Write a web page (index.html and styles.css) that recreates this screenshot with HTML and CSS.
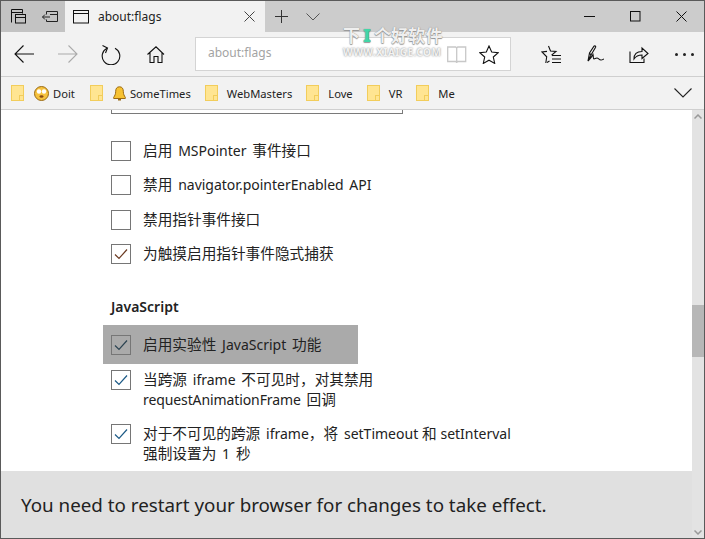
FILE: index.html
```html
<!DOCTYPE html>
<html lang="zh-CN">
<head>
<meta charset="utf-8">
<title>about:flags</title>
<link rel="stylesheet" href="styles.css">
</head>
<body>
<div class="window">
  <header class="titlebar">
    <div class="tabtools">
      <button class="ib tt1"><svg width="18" height="18" viewBox="0 0 18 18" fill="none" stroke="#111"><path d="M1.500 14.500v-13h11v4M1.500 4.500h11"/><rect x="5.500" y="6.500" width="10" height="8.500" fill="#c4c4c4"/><path d="M5.500 9.500h10"/></svg></button>
      <button class="ib tt2"><svg width="18" height="18" viewBox="0 0 18 18" fill="none" stroke="#222"><path d="M5.500 3.500h11v10h-11v-2M5.500 6.500v-3M16 6.500H9"/><path d="M9 9H1.500M4 6.500 1.500 9 4 11.500"/></svg></button>
    </div>
    <div class="tab">
      <svg class="tabicon" width="17" height="14" viewBox="0 0 17 14" fill="none" stroke="#111"><rect x=".5" y=".5" width="15" height="12.500"/><path d="M.5 3.500h15"/></svg>
      <span class="tabtitle">about:flags</span>
      <svg class="tabclose" width="11" height="11" viewBox="0 0 11 11" stroke="#444"><path d="M.5.500l10 10M10.500.500l-10 10"/></svg>
    </div>
    <div class="tabactions">
      <svg width="13" height="13" viewBox="0 0 13 13" stroke="#333"><path d="M6.500 0v13M0 6.500h13"/></svg>
      <svg width="14" height="8" viewBox="0 0 14 8" fill="none" stroke="#555"><path d="M.5.500 7 7 13.500.500"/></svg>
    </div>
    <div class="caption">
      <svg width="11" height="11" viewBox="0 0 11 11" stroke="#111"><path d="M0 5.500h11"/></svg>
      <svg width="11" height="11" viewBox="0 0 11 11" fill="none" stroke="#111"><rect x=".5" y=".5" width="9.500" height="9.500"/></svg>
      <svg width="11" height="11" viewBox="0 0 11 11" stroke="#111"><path d="M.5.500l10 10M10.500.500l-10 10"/></svg>
    </div>
  </header>

  <nav class="toolbar">
    <svg class="nb" width="20" height="18" viewBox="0 0 20 18" fill="none" stroke="#111" stroke-width="1.100"><path d="M20 9H1M9.500.5 1 9l8.500 8.500"/></svg>
    <svg class="nb fwd" width="20" height="18" viewBox="0 0 20 18" fill="none" stroke="#aaa" stroke-width="1.100"><path d="M0 9h19M10.500.5 19 9l-8.500 8.500"/></svg>
    <svg class="nb rel" width="20" height="21" viewBox="0 0 20 21" fill="none" stroke="#111" stroke-width="1.100"><path d="M6 4.200a8.800 8.800 0 1 0 8 0"/><path d="M1.500 1.500 6.500 4 4.500 9"/></svg>
    <svg class="nb home" width="18" height="17" viewBox="0 0 18 17" fill="none" stroke="#111" stroke-width="1.100"><path d="M.5 8.500 9 .8l8 7.700M3 6.500v10h4v-6h4v6h4v-10"/></svg>
    <div class="address">
      <span class="url">about:flags</span>
      <svg class="book" width="20" height="17" viewBox="0 0 20 17" fill="none" stroke="#c8c8c8" stroke-width="1.300"><path d="M.7 1h8l1 1 1-1h8v14.500h-8l-1 1-1-1h-8zM9.700 2v13.500"/></svg>
      <svg class="star" width="20" height="19" viewBox="0 0 20 19" fill="none" stroke="#111" stroke-width="1.100"><path d="M10 1l2.700 6 6.500.7-4.900 4.300 1.400 6.400L10 15.200l-5.700 3.200L5.700 12 .8 7.700 7.300 7z"/></svg>
    </div>
    <div class="tools">
      <svg width="20" height="19" viewBox="0 0 20 19" fill="none" stroke="#111" stroke-width="1.100"><path d="M7.500 1l2 5 5.500.5-4 3.300 1 1M4.800 18l.9-6.200L1 7l5-.6M6 17.500l2.500-1.500"/><path d="M11 10.500h9M11 14h9M11 17.500h9"/></svg>
      <svg width="18" height="18" viewBox="0 0 18 18" fill="none" stroke="#111" stroke-width="1.100"><path d="M1 16 2.500 8 7 1.200c.8-.8 2 .1 1.600 1L4 10zM2.500 8l1.500 2M1 16c2-2 4-4.500 5-6.500.5 2 0 4.500 1 4.500s1.500-1 3-1 2 2 4 2 2-1 3-1"/></svg>
      <svg width="20" height="18" viewBox="0 0 20 18" fill="none" stroke="#111" stroke-width="1.100"><path d="M1 6.500v11h14v-4M.5 17.500h15"/><path d="M5 14c0-5 3-7.500 8-7.500V3l6 5.500-6 5v-3.500c-3.500 0-6 1-8 4z"/></svg>
      <span class="dots"><i></i><i></i><i></i></span>
    </div>
    <div class="wm"><span class="wm1">下<b>I</b>个好软件</span><span class="wm2">WWW.XIAIGE.COM</span></div>
  </nav>

  <div class="favs">
    <span class="fav f1"><span class="folder"></span></span>
    <span class="fav f2"><svg width="15" height="15" viewBox="0 0 15 15"><circle cx="7.500" cy="7.500" r="7" fill="#f6c23d" stroke="#9a6a14"/><circle cx="5" cy="5.500" r="2.200" fill="#fff"/><circle cx="10" cy="5.500" r="2.200" fill="#fff"/><ellipse cx="7.500" cy="10.500" rx="2" ry="1.300" fill="#8a4a12"/></svg>Doit</span>
    <span class="fav f3"><span class="folder"></span></span>
    <span class="fav f4"><svg width="13" height="15" viewBox="0 0 13 15"><path d="M6.500.8c2.800 0 3.800 2 3.800 4.500 0 3 1 4.500 2 6v1.200H.700V11.300c1-1.500 2-3 2-6C2.700 2.800 3.700.8 6.500.8z" fill="#f7c232" stroke="#9a6a14"/><path d="M5 13h3v1.500H5z" fill="#9a6a14"/></svg>SomeTimes</span>
    <span class="fav f5"><span class="folder"></span>WebMasters</span>
    <span class="fav f6"><span class="folder"></span>Love</span>
    <span class="fav f7"><span class="folder"></span>VR</span>
    <span class="fav f8"><span class="folder"></span>Me</span>
    <svg class="favmore" width="18" height="10" viewBox="0 0 18 10" fill="none" stroke="#222" stroke-width="1.100"><path d="M.5.500 9 9 17.500.500"/></svg>
  </div>

  <div class="viewport">
    <div class="page">
      <main class="content">
        <div class="selectstub"></div>
        <label class="row r1"><span class="cb"></span><span>启用 <span class="la">MSPointer</span> 事件接口</span></label>
        <label class="row r2"><span class="cb"></span><span>禁用 <span class="la">navigator.pointerEnabled API</span></span></label>
        <label class="row r3"><span class="cb"></span><span>禁用指针事件接口</span></label>
        <label class="row r4"><span class="cb"><svg viewBox="0 0 18 18" fill="none" stroke="#6b3a22" stroke-width="1.200"><path d="M3 9.500 7 13.500 15 4.500"/></svg></span><span>为触摸启用指针事件隐式捕获</span></label>
        <h2 class="heading">JavaScript</h2>
        <label class="row hl"><span class="cb"><svg viewBox="0 0 18 18" fill="none" stroke="#2c4452" stroke-width="1.200"><path d="M3 9.500 7 13.500 15 4.500"/></svg></span><span>启用实验性 <span class="la">JavaScript</span> 功能</span></label>
        <label class="row r6"><span class="cb"><svg viewBox="0 0 18 18" fill="none" stroke="#1c5a86" stroke-width="1.200"><path d="M3 9.500 7 13.500 15 4.500"/></svg></span><span>当跨源 <span class="la">iframe</span> 不可见时，对其禁用<br><span class="la tight">requestAnimationFrame</span> 回调</span></label>
        <label class="row r7"><span class="cb"><svg viewBox="0 0 18 18" fill="none" stroke="#1c5a86" stroke-width="1.200"><path d="M3 9.500 7 13.500 15 4.500"/></svg></span><span>对于不可见的跨源 <span class="la">iframe</span>，将 <span class="nogap"><span class="la">setTimeout</span> 和 <span class="la">setInterval</span></span><br>强制设置为 <span class="la">1</span> 秒</span></label>
      </main>
      <footer class="notice">You need to restart your browser for changes to take effect.</footer>
    </div>
    <aside class="scrollbar">
      <svg width="8" height="5" viewBox="0 0 8 5" fill="none" stroke="#999" stroke-width="1.500"><path d="M.5 4.500 4 1l3.500 3.500"/></svg>
      <div class="track"><div class="thumb"></div></div>
      <svg width="8" height="5" viewBox="0 0 8 5" fill="none" stroke="#999" stroke-width="1.500"><path d="M.5.500 4 4 7.500.500"/></svg>
    </aside>
  </div>
</div>
</body>
</html>
```
FILE: styles.css
```css
* { box-sizing: border-box; }
html, body { margin: 0; height: 100%; }
body { font-family: "Noto Sans", "Noto Sans CJK SC", sans-serif; color: #222; overflow: hidden; background: #fff; }
.window { position: relative; width: 705px; height: 539px; border: 1px solid #5a5a5a; display: flex; flex-direction: column; }

.titlebar { height: 31px; background: #cccccc; display: flex; flex: none; align-items: stretch; }
.tabtools { width: 64px; background: #c3c3c3; display: flex; align-items: center; }
.ib { border: 0; background: none; padding: 0; display: flex; }
.tt1 { margin-left: 9px; }
.tt2 { margin-left: 13px; }
.tab { width: 200px; background: #f2f2f2; display: flex; align-items: center; padding-left: 8px; }
.tabicon { margin-right: 8px; }
.tabtitle { font-size: 12px; color: #222; width: 146px; }
.tabactions { display: flex; align-items: center; gap: 18px; padding-left: 10px; }
.caption { margin-left: auto; display: flex; align-items: center; gap: 35px; padding-right: 17px; }

.toolbar { position: relative; height: 45px; background: #f2f2f2; flex: none; display: flex; align-items: center; border-bottom: 1px solid #cfcfcf; }
.nb { flex: none; }
.toolbar > svg:first-child { margin-left: 13px; }
.fwd { margin-left: 24px; }
.rel { margin-left: 23px; }
.home { margin-left: 26px; }
.address { width: 316px; height: 34px; margin-left: 30px; background: #fff; border: 1px solid #d4d4d4; display: flex; align-items: center; padding-left: 12px; }
.url { font-size: 12px; color: #a3a3a3; width: 239px; margin-top: -3px; }
.star { margin-left: 12px; }
.tools { display: flex; align-items: center; margin-left: 30px; }
.tools svg:nth-child(2) { margin-left: 26px; }
.tools svg:nth-child(3) { margin-left: 24px; }
.dots { display: flex; gap: 5px; margin-left: 26px; }
.dots i { width: 3px; height: 3px; border-radius: 50%; background: #222; }

.wm { position: absolute; left: 342px; top: -6px; width: 110px; display: flex; flex-direction: column; align-items: flex-start; pointer-events: none; }
.wm1 { font-size: 17px; line-height: 20px; font-weight: 700; color: #efefef; text-shadow: 0 0 1px #777, 0 1px 1px #999; letter-spacing: .2px; white-space: nowrap; }
.wm1 b { color: #43d5a8; margin: 0 3px; }
.wm2 { font-size: 10px; line-height: 12px; margin-top: 0; font-weight: 700; color: #f2f2f2; text-shadow: 0 0 2px #777; letter-spacing: .5px; white-space: nowrap; }

.favs { position: relative; height: 33px; flex: none; background: #f2f2f2; border-bottom: 1px solid #cfcfcf; display: flex; align-items: center; font-size: 11.200px; color: #222; }
.fav { display: flex; align-items: center; white-space: nowrap; }
.folder { position: relative; display: block; width: 13px; height: 16px; background: #ffe592; border: 1px solid #f2cd5b; flex: none; }
.folder::after { content: ""; position: absolute; right: 0; bottom: 0; width: 3px; height: 4px; border-left: 1px solid #f2cd5b; border-top: 1px solid #f2cd5b; }
.f1 { margin-left: 10px; }
.f2 { margin-left: 10px; }
.f2 svg { margin-right: 4px; }
.f3 { margin-left: 15px; }
.f4 { margin-left: 10px; }
.f4 svg { margin-right: 4px; }
.f5 { margin-left: 14px; }
.f5 .folder { margin-right: 9px; }
.f6 { margin-left: 14px; }
.f6 .folder { margin-right: 9px; }
.f7 { margin-left: 14px; }
.f7 .folder { margin-right: 9px; }
.f8 { margin-left: 14px; }
.f8 .folder { margin-right: 9px; }
.favmore { margin-left: auto; margin-right: 12px; }

.viewport { flex: 1; min-height: 0; display: flex; }
.page { flex: 1; min-width: 0; display: flex; flex-direction: column; background: #fff; }
.content { flex: 1; min-height: 0; overflow: hidden; padding-left: 110px; font-size: 14.670px; line-height: 20px; color: #222; word-spacing: 2px; }
.la { font-size: 14px; line-height: 0; }
.tight { letter-spacing: -.1px; }
.nogap { word-spacing: 0; }
.selectstub { width: 292px; height: 4px; border: 1px solid #7a7a7a; border-top: 0; }
.row { display: flex; align-items: flex-start; gap: 12px; }
.cb { flex: none; width: 20px; height: 20px; border: 1px solid #767676; display: block; }
.cb svg { display: block; width: 18px; height: 18px; }
.row > span:last-child { margin-top: -1px; white-space: nowrap; }
.r1 { margin-top: 27px; }
.r2 { margin-top: 14px; }
.r3 { margin-top: 15px; }
.r4 { margin-top: 14px; }
.heading { margin: 33px 0 0; font-size: 14px; line-height: 20px; font-weight: 600; color: #222; }
.hl { width: 255px; height: 39px; margin: 8px 0 0 -8px; padding: 10px 0 0 8px; background: #aaaaaa; }
.r6 { margin-top: 6px; }
.r7 { margin-top: 15px; }
.notice { height: 67px; flex: none; background: #e0e0e0; padding: 21px 0 0 20px; font-size: 18.800px; line-height: 27px; color: #222; white-space: nowrap; overflow: hidden; }

.scrollbar { width: 12px; flex: none; background: #e3e3e3; display: flex; flex-direction: column; align-items: center; padding: 4px 0 3px; }
.track { flex: 1; width: 100%; display: flex; flex-direction: column; }
.thumb { width: 100%; height: 52px; background: #b7b7b7; margin-top: 186px; }
```
